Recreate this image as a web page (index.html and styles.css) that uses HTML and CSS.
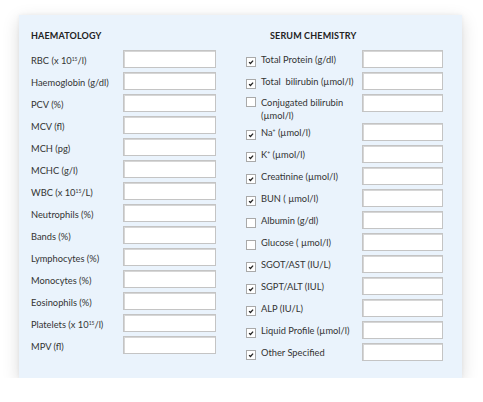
FILE: index.html
```html
<!DOCTYPE html>
<html>
<head>
<meta charset="utf-8">
<link rel="stylesheet" href="styles.css">
</head>
<body>
<div class="card">
  <section class="col col-left">
    <h2 class="heading">HAEMATOLOGY</h2>
    <div class="row"><span class="label">RBC (x 10<sup>15</sup>/l)</span><span class="field"></span></div>
    <div class="row"><span class="label">Haemoglobin (g/dl)</span><span class="field"></span></div>
    <div class="row"><span class="label">PCV (%)</span><span class="field"></span></div>
    <div class="row"><span class="label">MCV (fl)</span><span class="field"></span></div>
    <div class="row"><span class="label">MCH (pg)</span><span class="field"></span></div>
    <div class="row"><span class="label">MCHC (g/l)</span><span class="field"></span></div>
    <div class="row"><span class="label">WBC (x 10<sup>15</sup>/L)</span><span class="field"></span></div>
    <div class="row"><span class="label">Neutrophils (%)</span><span class="field"></span></div>
    <div class="row"><span class="label">Bands (%)</span><span class="field"></span></div>
    <div class="row"><span class="label">Lymphocytes (%)</span><span class="field"></span></div>
    <div class="row"><span class="label">Monocytes (%)</span><span class="field"></span></div>
    <div class="row"><span class="label">Eosinophils (%)</span><span class="field"></span></div>
    <div class="row"><span class="label">Platelets (x 10<sup>15</sup>/l)</span><span class="field"></span></div>
    <div class="row"><span class="label">MPV (fl)</span><span class="field"></span></div>
  </section>
  <section class="col col-right">
    <h2 class="heading heading-right">SERUM CHEMISTRY</h2>
    <div class="row"><span class="check on"><svg viewBox="0 0 10 10"><path d="M2.6 5.2 L4.3 6.9 L7.6 3.2"/></svg></span><span class="label">Total Protein (g/dl)</span><span class="field"></span></div>
    <div class="row"><span class="check on"><svg viewBox="0 0 10 10"><path d="M2.6 5.2 L4.3 6.9 L7.6 3.2"/></svg></span><span class="label">Total&nbsp; bilirubin (µmol/l)</span><span class="field"></span></div>
    <div class="row row-tall"><span class="check"></span><span class="label">Conjugated bilirubin (µmol/l)</span><span class="field"></span></div>
    <div class="row"><span class="check on"><svg viewBox="0 0 10 10"><path d="M2.6 5.2 L4.3 6.9 L7.6 3.2"/></svg></span><span class="label">Na<sup>+</sup> (µmol/l)</span><span class="field"></span></div>
    <div class="row"><span class="check on"><svg viewBox="0 0 10 10"><path d="M2.6 5.2 L4.3 6.9 L7.6 3.2"/></svg></span><span class="label">K<sup>+</sup> (µmol/l)</span><span class="field"></span></div>
    <div class="row"><span class="check on"><svg viewBox="0 0 10 10"><path d="M2.6 5.2 L4.3 6.9 L7.6 3.2"/></svg></span><span class="label">Creatinine (µmol/l)</span><span class="field"></span></div>
    <div class="row"><span class="check on"><svg viewBox="0 0 10 10"><path d="M2.6 5.2 L4.3 6.9 L7.6 3.2"/></svg></span><span class="label">BUN ( µmol/l)</span><span class="field"></span></div>
    <div class="row"><span class="check"></span><span class="label">Albumin (g/dl)</span><span class="field"></span></div>
    <div class="row"><span class="check"></span><span class="label">Glucose ( µmol/l)</span><span class="field"></span></div>
    <div class="row"><span class="check on"><svg viewBox="0 0 10 10"><path d="M2.6 5.2 L4.3 6.9 L7.6 3.2"/></svg></span><span class="label">SGOT/AST (IU/L)</span><span class="field"></span></div>
    <div class="row"><span class="check on"><svg viewBox="0 0 10 10"><path d="M2.6 5.2 L4.3 6.9 L7.6 3.2"/></svg></span><span class="label">SGPT/ALT (IUL)</span><span class="field"></span></div>
    <div class="row"><span class="check on"><svg viewBox="0 0 10 10"><path d="M2.6 5.2 L4.3 6.9 L7.6 3.2"/></svg></span><span class="label">ALP (IU/L)</span><span class="field"></span></div>
    <div class="row"><span class="check on"><svg viewBox="0 0 10 10"><path d="M2.6 5.2 L4.3 6.9 L7.6 3.2"/></svg></span><span class="label">Liquid Profile (µmol/l)</span><span class="field"></span></div>
    <div class="row"><span class="check on"><svg viewBox="0 0 10 10"><path d="M2.6 5.2 L4.3 6.9 L7.6 3.2"/></svg></span><span class="label">Other Specified</span><span class="field"></span></div>
  </section>
</div>
</body>
</html>
```
FILE: styles.css
```css
html, body {
  margin: 0;
  padding: 0;
  background: #ffffff;
}
body {
  font-family: Lato, "Open Sans", "Liberation Sans", sans-serif;
  color: #333;
}
.card {
  margin: 15px 0 0 19px;
  width: 443px;
  box-sizing: border-box;
  padding: 15px 19px 17px 12px;
  background: #eaf3fc;
  box-shadow: 0 5px 16px rgba(0, 0, 0, 0.15), 0 0 4px rgba(0, 0, 0, 0.05);
  display: grid;
  grid-template-columns: 185px 197px;
  column-gap: 30px;
  align-items: start;
}
.col {
  display: flex;
  flex-direction: column;
  gap: 4px;
}
.heading {
  margin: 0 0 4px 0;
  font-size: 9px;
  line-height: 12px;
  font-weight: 700;
  color: #222;
  letter-spacing: 0.15px;
}
.heading-right {
  padding-left: 24px;
}
.row {
  display: flex;
  align-items: flex-start;
  height: 18px;
}
.row-tall {
  height: 25px;
}
.label {
  flex: 1;
  font-size: 9.3px;
  line-height: 12px;
  padding-top: 5px;
  color: #333;
  white-space: nowrap;
}
.col-right .label {
  padding-top: 4px;
}
.row-tall .label {
  padding-top: 3px;
  padding-right: 4px;
  line-height: 12.5px;
  white-space: normal;
}
sup {
  font-size: 5px;
  line-height: 0;
  vertical-align: 3px;
}
.field {
  flex: none;
  width: 93px;
  height: 18px;
  box-sizing: border-box;
  background: #fff;
  border: 1px solid #c4c4c4;
  box-shadow: inset 1px 1px 0 #d6d6d6;
}
.col-right .field {
  width: 81px;
}
.check {
  flex: none;
  width: 10px;
  height: 10px;
  box-sizing: border-box;
  margin-top: 7px;
  margin-right: 5px;
  background: #fff;
  border: 1px solid #a9a9a9;
  display: flex;
}
.row-tall .check {
  margin-top: 3px;
}
.check svg {
  width: 8px;
  height: 8px;
}
.check path {
  fill: none;
  stroke: #222;
  stroke-width: 1.6;
}
```
